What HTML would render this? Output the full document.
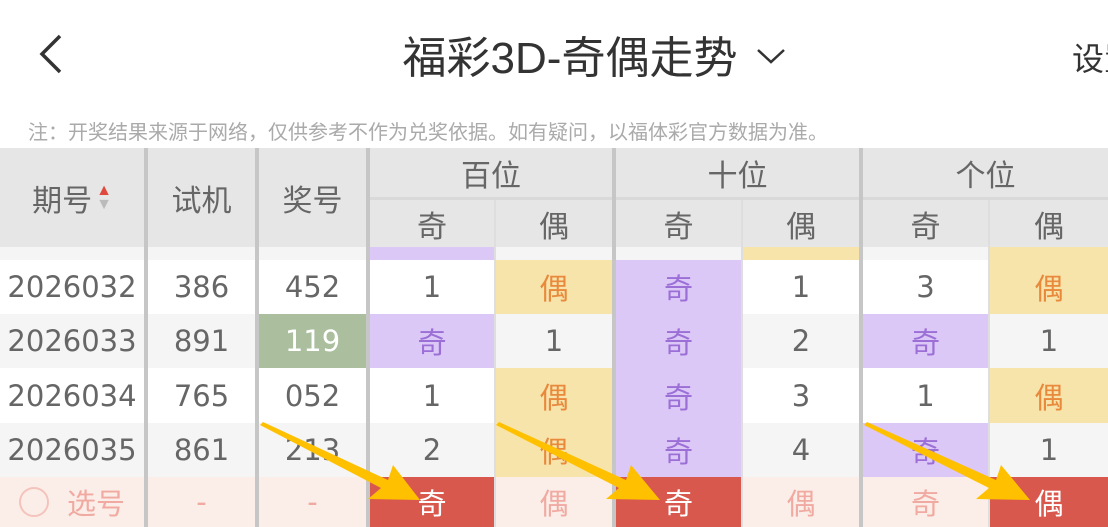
<!DOCTYPE html>
<html><head><meta charset="utf-8"><style>
*{margin:0;padding:0;box-sizing:border-box}
body{width:1108px;height:527px;overflow:hidden;background:#fff;position:relative;font-family:"DejaVu Sans","Noto Sans CJK SC",sans-serif;color:#555}
.a{position:absolute;display:flex;align-items:center;justify-content:center}
.hd{background:#e6e6e6;color:#666;font-size:30px;font-family:"Liberation Sans","Noto Sans CJK SC",sans-serif}
.c{font-size:29px;color:#666}
.p{background:#dcc8f7;color:#9b6fd6}
.y{background:#f7e4ab;color:#e8893c}
.g{background:#f5f5f5}
.w{background:#fff}
.r{background:#d9584e;color:#fff}
.s{background:#fbeee8;color:#f0aaa2}
.sep{position:absolute;top:148px;height:379px;background:#c6c6c6}
</style></head><body>
<svg style="position:absolute;left:36px;top:32px" width="30" height="44"><path d="M24 4 L6 22 L24 40" stroke="#333" stroke-width="3.5" fill="none"/></svg>
<div class="a" style="left:380px;top:26px;width:380px;height:56px;font-size:44px;color:#333;font-family:'Liberation Sans','Noto Sans CJK SC',sans-serif;white-space:nowrap">福彩3D-奇偶走势</div>
<svg style="position:absolute;left:755px;top:45px" width="34" height="22"><path d="M3 5 L16 17 L29 5" stroke="#333" stroke-width="2.5" fill="none"/></svg>
<div style="position:absolute;left:1072px;top:34px;font-size:32px;color:#333;white-space:nowrap;font-family:'Liberation Sans','Noto Sans CJK SC',sans-serif">设置</div>
<div style="position:absolute;left:28px;top:116px;font-size:20px;color:#aaa;white-space:nowrap;font-family:'Liberation Sans','Noto Sans CJK SC',sans-serif">注：开奖结果来源于网络，仅供参考不作为兑奖依据。如有疑问，以福体彩官方数据为准。</div>

<div class="a hd" style="left:0;top:148px;width:1108px;height:99px"></div>
<div class="a hd" style="left:0;top:148px;width:144px;height:99px">期号<span style="display:inline-flex;flex-direction:column;margin-left:4px;font-size:16px;line-height:14px"><span style="color:#e0483e">▲</span><span style="color:#bbb">▼</span></span></div>
<div class="a hd" style="left:148px;top:148px;width:107px;height:99px">试机</div>
<div class="a hd" style="left:259px;top:148px;width:107px;height:99px">奖号</div>
<div class="a hd" style="left:370px;top:148px;width:242px;height:50px">百位</div>
<div class="a hd" style="left:616px;top:148px;width:243px;height:50px">十位</div>
<div class="a hd" style="left:863px;top:148px;width:245px;height:50px">个位</div>
<div style="position:absolute;left:370px;top:197px;width:738px;height:3px;background:#d9d9d9"></div>
<div class="a hd" style="left:370px;top:200px;width:124px;height:47px">奇</div>
<div class="a hd" style="left:496px;top:200px;width:116px;height:47px">偶</div>
<div class="a hd" style="left:616px;top:200px;width:125px;height:47px">奇</div>
<div class="a hd" style="left:743px;top:200px;width:116px;height:47px">偶</div>
<div class="a hd" style="left:863px;top:200px;width:125px;height:47px">奇</div>
<div class="a hd" style="left:990px;top:200px;width:118px;height:47px">偶</div>

<div class="a g" style="left:0;top:247px;width:1108px;height:13px"></div>
<div class="a p" style="left:370px;top:247px;width:124px;height:13px"></div>
<div class="a y" style="left:743px;top:247px;width:116px;height:13px"></div>
<div class="a y" style="left:990px;top:247px;width:118px;height:13px"></div>

<div class="a w" style="left:0;top:260px;width:1108px;height:54px"></div>
<div class="a c" style="left:0;top:260px;width:144px;height:54px">2026032</div>
<div class="a c" style="left:148px;top:260px;width:107px;height:54px">386</div>
<div class="a c" style="left:259px;top:260px;width:107px;height:54px">452</div>
<div class="a c" style="left:370px;top:260px;width:124px;height:54px">1</div>
<div class="a c y" style="left:496px;top:260px;width:116px;height:54px">偶</div>
<div class="a c p" style="left:616px;top:260px;width:125px;height:54px">奇</div>
<div class="a c" style="left:743px;top:260px;width:116px;height:54px">1</div>
<div class="a c" style="left:863px;top:260px;width:125px;height:54px">3</div>
<div class="a c y" style="left:990px;top:260px;width:118px;height:54px">偶</div>

<div class="a g" style="left:0;top:314px;width:1108px;height:54px"></div>
<div class="a c" style="left:0;top:314px;width:144px;height:54px">2026033</div>
<div class="a c" style="left:148px;top:314px;width:107px;height:54px">891</div>
<div class="a c" style="left:259px;top:314px;width:107px;height:54px;background:#abbf9f;color:#fff">119</div>
<div class="a c p" style="left:370px;top:314px;width:124px;height:54px">奇</div>
<div class="a c" style="left:496px;top:314px;width:116px;height:54px">1</div>
<div class="a c p" style="left:616px;top:314px;width:125px;height:54px">奇</div>
<div class="a c" style="left:743px;top:314px;width:116px;height:54px">2</div>
<div class="a c p" style="left:863px;top:314px;width:125px;height:54px">奇</div>
<div class="a c" style="left:990px;top:314px;width:118px;height:54px">1</div>

<div class="a w" style="left:0;top:368px;width:1108px;height:55px"></div>
<div class="a c" style="left:0;top:368px;width:144px;height:55px">2026034</div>
<div class="a c" style="left:148px;top:368px;width:107px;height:55px">765</div>
<div class="a c" style="left:259px;top:368px;width:107px;height:55px">052</div>
<div class="a c" style="left:370px;top:368px;width:124px;height:55px">1</div>
<div class="a c y" style="left:496px;top:368px;width:116px;height:55px">偶</div>
<div class="a c p" style="left:616px;top:368px;width:125px;height:55px">奇</div>
<div class="a c" style="left:743px;top:368px;width:116px;height:55px">3</div>
<div class="a c" style="left:863px;top:368px;width:125px;height:55px">1</div>
<div class="a c y" style="left:990px;top:368px;width:118px;height:55px">偶</div>

<div class="a g" style="left:0;top:423px;width:1108px;height:54px"></div>
<div class="a c" style="left:0;top:423px;width:144px;height:54px">2026035</div>
<div class="a c" style="left:148px;top:423px;width:107px;height:54px">861</div>
<div class="a c" style="left:259px;top:423px;width:107px;height:54px">213</div>
<div class="a c" style="left:370px;top:423px;width:124px;height:54px">2</div>
<div class="a c y" style="left:496px;top:423px;width:116px;height:54px">偶</div>
<div class="a c p" style="left:616px;top:423px;width:125px;height:54px">奇</div>
<div class="a c" style="left:743px;top:423px;width:116px;height:54px">4</div>
<div class="a c p" style="left:863px;top:423px;width:125px;height:54px">奇</div>
<div class="a c" style="left:990px;top:423px;width:118px;height:54px">1</div>

<div class="a s" style="left:0;top:477px;width:1108px;height:50px"></div>
<div class="a c s" style="left:0;top:477px;width:144px;height:50px"><span style="display:inline-block;width:30px;height:30px;border:2px solid #f4c4bc;border-radius:50%;margin-right:18px"></span>选号</div>
<div class="a c s" style="left:148px;top:477px;width:107px;height:50px">-</div>
<div class="a c s" style="left:259px;top:477px;width:107px;height:50px">-</div>
<div class="a c r" style="left:370px;top:477px;width:124px;height:50px">奇</div>
<div class="a c s" style="left:496px;top:477px;width:116px;height:50px">偶</div>
<div class="a c r" style="left:616px;top:477px;width:125px;height:50px">奇</div>
<div class="a c s" style="left:743px;top:477px;width:116px;height:50px">偶</div>
<div class="a c s" style="left:863px;top:477px;width:125px;height:50px">奇</div>
<div class="a c r" style="left:990px;top:477px;width:118px;height:50px">偶</div>

<div class="sep" style="left:144px;width:4px"></div>
<div class="sep" style="left:255px;width:4px"></div>
<div class="sep" style="left:366px;width:4px"></div>
<div class="sep" style="left:612px;width:4px"></div>
<div class="sep" style="left:859px;width:4px"></div>
<div style="position:absolute;left:494px;top:200px;width:2px;height:327px;background:#dedede"></div>
<div style="position:absolute;left:741px;top:200px;width:2px;height:327px;background:#dedede"></div>
<div style="position:absolute;left:988px;top:200px;width:2px;height:327px;background:#dedede"></div>

<svg style="position:absolute;left:0;top:0" width="1108" height="527">
<g fill="#ffc000">
<polygon points="260,425 263,422 388,480 393,465 420,500 368,499 381,488"/>
<polygon points="496,425 499,422 626,480 631,465 660,500 606,499 619,488"/>
<polygon points="864,425 867,422 996,480 1001,465 1030,500 976,499 989,488"/>
</g></svg>
</body></html>
